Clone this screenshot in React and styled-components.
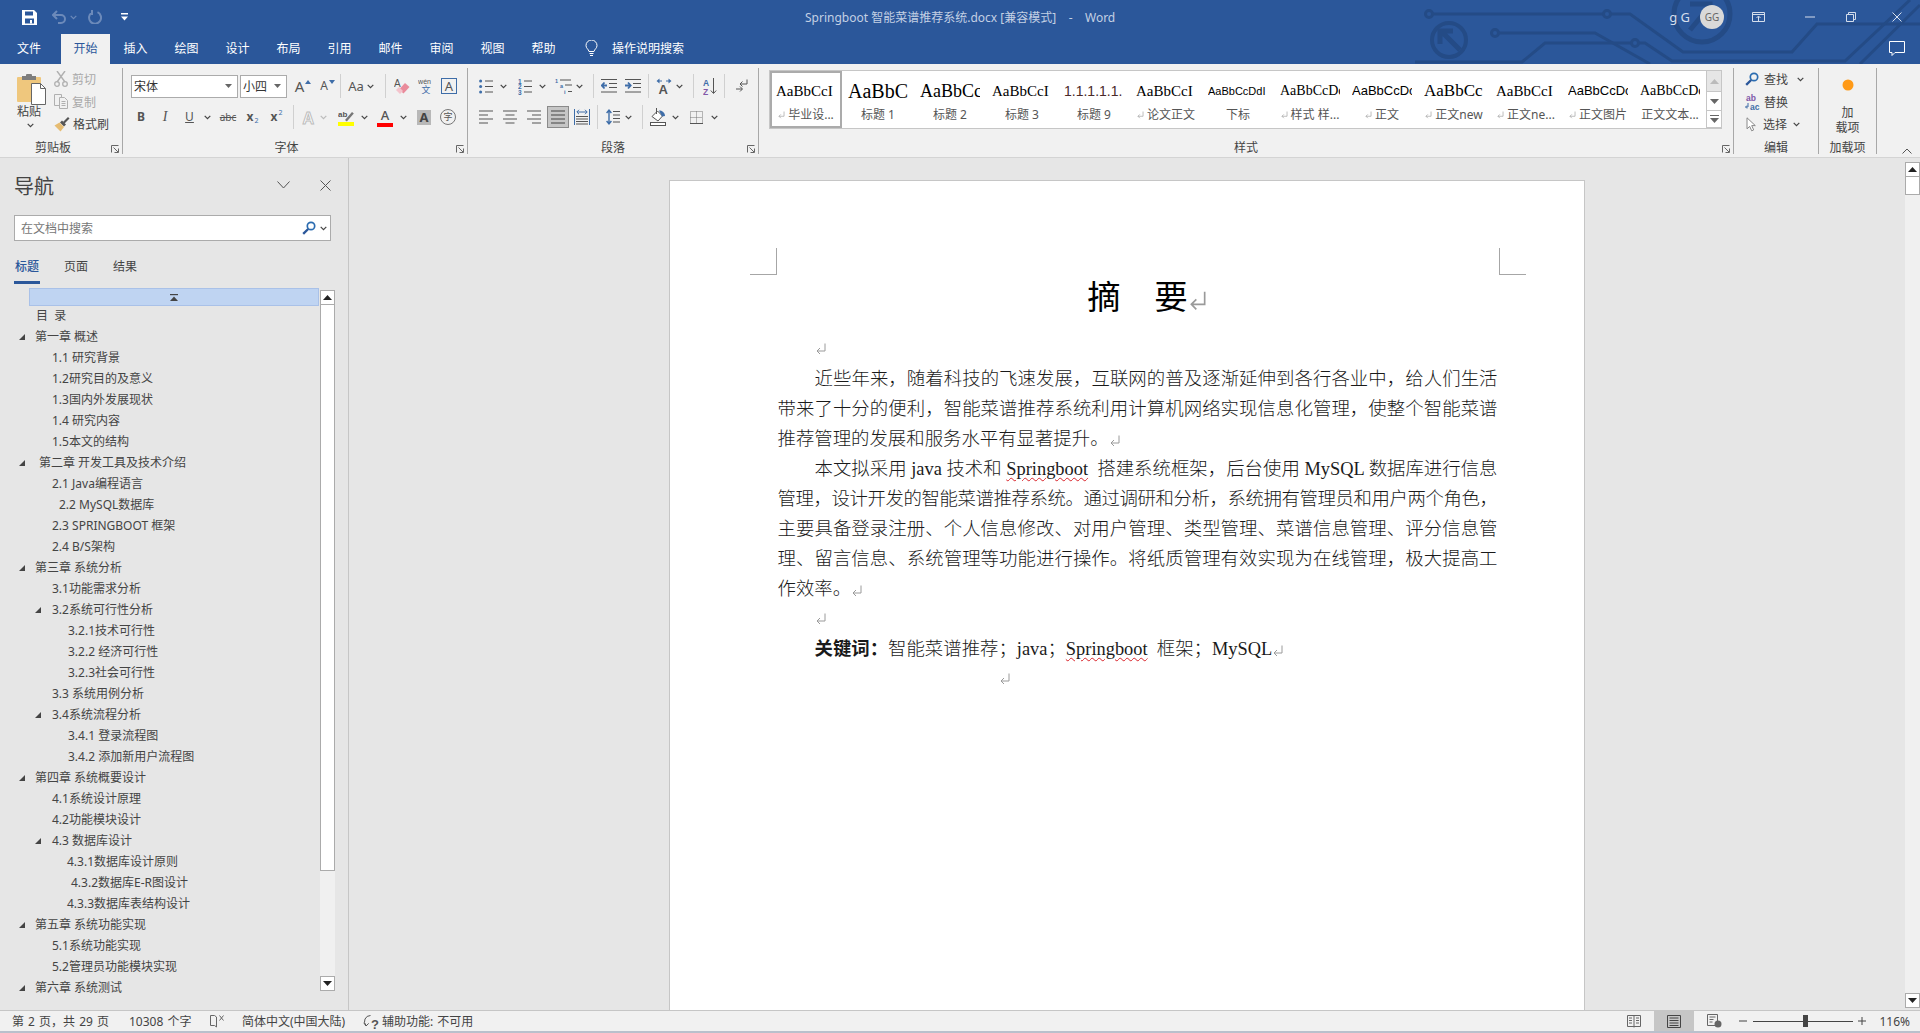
import React from 'react';
import styled, { createGlobalStyle } from 'styled-components';

const GlobalStyle = createGlobalStyle`
  html, body {
    margin: 0;
    padding: 0;
    height: 100%;
    overflow: hidden;
  }
  body {
    font-family: "Noto Sans", "Noto Sans CJK SC", sans-serif;
    font-size: 12px;
    color: #444;
  }
  * {
    box-sizing: border-box;
  }
`;

const Shell = styled.div`
  width: 1920px;
  height: 1033px;
  display: flex;
  flex-direction: column;
  overflow: hidden;
  background: #e6e6e6;
`;

/* ---------- title bar ---------- */

const Head = styled.header`
  position: relative;
  height: 64px;
  flex: none;
  background: #2b579a;
  overflow: hidden;
`;

const Circuit = styled.svg`
  position: absolute;
  right: 0;
  top: 0;
`;

const TitleRow = styled.div`
  position: relative;
  height: 34px;
  display: flex;
  align-items: center;
`;

const Qat = styled.div`
  width: 805px;
  display: flex;
  align-items: center;
  padding-left: 22px;
`;

const QatItem = styled.span`
  display: inline-flex;
  margin-left: ${p => p.$ml || 0}px;
`;

const DocTitle = styled.div`
  flex: 1;
  color: #c3d0e4;
  font-size: 12px;
  white-space: pre;
`;

const Account = styled.div`
  display: flex;
  align-items: center;
  color: #d5deec;
  font-size: 13px;
`;

const Avatar = styled.span`
  width: 24px;
  height: 24px;
  margin-left: 10px;
  border-radius: 50%;
  background: #d9d9d9;
  color: #666;
  font-size: 10px;
  display: flex;
  align-items: center;
  justify-content: center;
`;

const WinBtn = styled.span`
  display: inline-flex;
  margin-left: ${p => p.$ml}px;
`;

const TabRow = styled.nav`
  position: relative;
  height: 30px;
  display: flex;
  align-items: stretch;
  padding-left: 3px;
`;

const RibbonTab = styled.span`
  width: ${p => p.$w || 51}px;
  margin-right: ${p => p.$mr || 0}px;
  display: flex;
  align-items: center;
  justify-content: center;
  color: ${p => (p.$active ? '#2b579a' : '#fff')};
  background: ${p => (p.$active ? '#f1f1f1' : 'transparent')};
  padding-bottom: 2px;
`;

const TellMe = styled.span`
  display: flex;
  align-items: center;
  margin-left: 16px;
  gap: 14px;
  color: #fff;
  padding-bottom: 2px;
`;

const CommentBtn = styled.span`
  position: absolute;
  right: 15px;
  top: 7px;
  display: flex;
`;

/* ---------- ribbon ---------- */

const Ribbon = styled.section`
  height: 94px;
  flex: none;
  display: flex;
  padding-top: 4px;
  background: #f1f1f1;
  border-bottom: 1px solid #d4d4d4;
`;

const Group = styled.div`
  position: relative;
  width: ${p => p.$w}px;
  height: 86px;
  flex: none;
  border-right: 1px solid #a8a8a8;
`;

const GroupLabel = styled.div`
  position: absolute;
  left: 0;
  right: ${p => p.$inset || 0}px;
  bottom: -2px;
  height: 16px;
  line-height: 16px;
  text-align: center;
  color: #444;
`;

const Launcher = styled.span`
  position: absolute;
  right: 3px;
  bottom: 1px;
  display: flex;
`;

const ClipBody = styled.div`
  display: flex;
  padding-left: 17px;
`;

const PasteCol = styled.div`
  width: 28px;
  padding-top: 6px;
  display: flex;
  flex-direction: column;
`;

const PasteText = styled.span`
  width: 24px;
  margin-top: -2px;
  text-align: center;
  line-height: 18px;
`;

const PasteChev = styled.span`
  width: 26px;
  display: flex;
  justify-content: center;
  margin-top: 2px;
`;

const SmallCol = styled.div`
  margin-left: 9px;
  display: flex;
  flex-direction: column;
`;

const SmallBtn = styled.div`
  height: 22.5px;
  display: flex;
  align-items: center;
  gap: ${p => p.$gap || 4}px;
  color: ${p => (p.$dim ? '#a9a9a9' : '#444')};
`;

const ToolRows = styled.div`
  display: flex;
  flex-direction: column;
  gap: 7px;
  padding: 6px 0 0 ${p => p.$pl}px;
`;

const ToolRow = styled.div`
  height: 24px;
  display: flex;
  align-items: center;
`;

const Tool = styled.span`
  width: ${p => p.$w}px;
  margin-left: ${p => p.$ml || 0}px;
  flex: none;
  display: inline-flex;
  align-items: center;
  justify-content: center;
`;

const Rule = styled.span`
  width: 1px;
  height: 24px;
  flex: none;
  margin-left: ${p => p.$ml}px;
  background: #d0d0d0;
`;

const Combo = styled.span`
  width: ${p => p.$w}px;
  height: 23px;
  margin-left: ${p => p.$ml || 0}px;
  flex: none;
  display: flex;
  align-items: center;
  justify-content: space-between;
  padding: 0 5px 0 2px;
  background: #fff;
  border: 1px solid #ababab;
  color: #333;
`;

const Letter = styled.span`
  font-family: ${p => (p.$serif ? '"Liberation Serif", serif' : '"Noto Sans", sans-serif')};
  font-size: ${p => p.$size || 13}px;
  font-weight: ${p => (p.$bold ? 700 : 400)};
  font-style: ${p => (p.$italic ? 'italic' : 'normal')};
  text-decoration: ${p => p.$deco || 'none'};
  color: ${p => p.$color || '#555'};
  line-height: 16px;
`;

const SupSub = styled.span`
  display: inline-flex;
  font-size: 7px;
  color: #3e6da8;
  line-height: 8px;
  margin-left: 1px;
  transform: translateY(${p => (p.$up ? '-4px' : '4px')});
`;

const BoxA = styled.span`
  width: 16px;
  height: 16px;
  display: flex;
  align-items: center;
  justify-content: center;
  border: 1px solid #3e6da8;
  color: #555;
  font-size: 13px;
  line-height: 14px;
`;

const GrayA = styled.span`
  width: 14px;
  height: 15px;
  background: #b8b8b8;
  color: #444;
  font-size: 13px;
  font-weight: 700;
  line-height: 15px;
  display: flex;
  align-items: center;
  justify-content: center;
`;

const RoundChar = styled.span`
  width: 16px;
  height: 16px;
  border: 1px solid #777;
  border-radius: 50%;
  color: #555;
  font-size: 9px;
  line-height: 14px;
  display: flex;
  align-items: center;
  justify-content: center;
`;

const ColorA = styled.span`
  width: 16px;
  height: 19px;
  display: flex;
  flex-direction: column;
  align-items: center;
  justify-content: flex-end;
  color: #555;
  font-size: 13px;
  font-weight: 500;
  line-height: 14px;
`;

const ColorBar = styled.span`
  width: 16px;
  height: 4px;
  margin-top: 1px;
  flex: none;
  background: ${p => p.$color};
`;

const ActiveBox = styled.span`
  width: 22px;
  height: 22px;
  margin-left: ${p => p.$ml}px;
  flex: none;
  display: flex;
  align-items: center;
  justify-content: center;
  background: #c6c6c6;
  border: 1px solid #8a8a8a;
`;

/* styles gallery */

const GalleryWrap = styled.div`
  padding: 2px 0 0 10px;
`;

const Gallery = styled.div`
  width: 953px;
  height: 59px;
  display: flex;
  background: #fff;
  border: 1px solid #c6c6c6;
`;

const StyleCell = styled.div`
  width: 72px;
  flex: none;
  display: flex;
  flex-direction: column;
  align-items: center;
  padding: 3px 5px 0;
  overflow: hidden;
  border: ${p => (p.$selected ? '2px solid #ababab' : '2px solid transparent')};
`;

const StylePreview = styled.div`
  width: 60px;
  height: 31px;
  line-height: 30px;
  white-space: nowrap;
  overflow: hidden;
  color: ${p => p.$color || '#000'};
  font-family: ${p => (p.$sans ? '"Liberation Sans", sans-serif' : '"Liberation Serif", serif')};
  font-size: ${p => p.$size}px;
`;

const StyleName = styled.div`
  height: 16px;
  line-height: 16px;
  white-space: nowrap;
  color: #555;
  display: flex;
  align-items: center;
  gap: 3px;
`;

const GalleryScroll = styled.div`
  width: 15px;
  flex: none;
  display: flex;
  flex-direction: column;
  border-left: 1px solid #c6c6c6;
`;

const GalleryBtn = styled.span`
  height: ${p => p.$h}px;
  display: flex;
  align-items: center;
  justify-content: center;
  background: ${p => (p.$dim ? '#e6e6e6' : '#fff')};
  border-bottom: 1px solid #c6c6c6;
`;

const EditCol = styled.div`
  display: flex;
  flex-direction: column;
  padding-left: 11px;
`;

const AddinBody = styled.div`
  display: flex;
  flex-direction: column;
  align-items: center;
  padding-top: 11px;
  line-height: 15px;
`;

const AddinText = styled.div`
  margin-top: 14px;
  text-align: center;
`;

const Collapse = styled.span`
  align-self: flex-end;
  margin: 0 0 3px 25px;
  display: flex;
`;

/* ---------- main ---------- */

const Main = styled.main`
  flex: 1;
  min-height: 0;
  display: flex;
`;

const NavPane = styled.aside`
  width: 349px;
  flex: none;
  display: flex;
  flex-direction: column;
  overflow: hidden;
  background: #e6e6e6;
  border-right: 1px solid #c6c6c6;
`;

const NavHead = styled.div`
  height: 28px;
  margin-top: 13px;
  display: flex;
  align-items: center;
  padding: 0 17px 0 14px;
  font-size: 20px;
  color: #444;
`;

const NavTitle = styled.span`
  flex: 1;
`;

const NavClose = styled.span`
  display: flex;
  margin-left: 30px;
`;

const SearchBox = styled.div`
  width: 317px;
  height: 26px;
  margin: 16px 0 0 14px;
  flex: none;
  display: flex;
  align-items: center;
  padding: 0 3px 0 6px;
  background: #fff;
  border: 1px solid #ababab;
  color: #777;
`;

const SearchHint = styled.span`
  flex: 1;
`;

const NavTabs = styled.div`
  display: flex;
  gap: 23px;
  margin: 16px 0 0 14px;
  flex: none;
`;

const NavTab = styled.span`
  width: 26px;
  padding-bottom: 5px;
  text-align: center;
  line-height: 19px;
  color: ${p => (p.$active ? '#2b579a' : '#444')};
  font-weight: ${p => (p.$active ? 500 : 400)};
  border-bottom: 3px solid ${p => (p.$active ? '#2b579a' : 'transparent')};
`;

const TreeArea = styled.div`
  margin-top: 4px;
  flex: 1;
  min-height: 0;
  display: flex;
`;

const TreeCol = styled.div`
  width: 320px;
  flex: none;
`;

const TopBar = styled.div`
  height: 18px;
  margin: 0 0 -1px 29px;
  width: 290px;
  display: flex;
  align-items: center;
  justify-content: center;
  background: #bfd4f2;
  border: 1px solid #a9c1e8;
`;

const TreeRow = styled.div`
  height: 21px;
  display: flex;
  align-items: center;
  padding-left: ${p => p.$pl}px;
  white-space: pre;
  color: #444;
  line-height: 21px;
`;

const Caret = styled.span`
  width: ${p => p.$w}px;
  flex: none;
  display: flex;
`;

const ScrollCol = styled.div`
  width: 15px;
  height: ${p => p.$h}px;
  flex: none;
  margin-top: ${p => p.$mt}px;
  display: flex;
  flex-direction: column;
  background: #f0f0f0;
`;

const ScrollBtn = styled.span`
  width: 15px;
  height: 15px;
  flex: none;
  display: flex;
  align-items: center;
  justify-content: center;
  background: #fff;
  border: 1px solid #ababab;
`;

const ScrollThumb = styled.span`
  height: ${p => p.$h}px;
  flex: none;
  background: #fff;
  border: 1px solid #ababab;
  border-top: 0;
`;

const ScrollTrack = styled.span`
  flex: 1;
`;

const DocArea = styled.div`
  flex: 1;
  min-width: 0;
  padding: 22px 0 0 319.5px;
  overflow: hidden;
`;

const Page = styled.article`
  position: relative;
  width: 916px;
  height: 900px;
  padding: 96px 86px 0 108px;
  background: #fff;
  border: 1px solid #c6c6c6;
  color: #1a1a1a;
  font-family: "Liberation Serif", "Noto Sans CJK SC", serif;
  font-size: 18.4px;
  font-weight: 300;
`;

const CropMark = styled.span`
  position: absolute;
  top: 67px;
  width: 27px;
  height: 27px;
  border-bottom: 1px solid #a6a6a6;
  ${p => (p.$right ? 'left: 829px; border-left: 1px solid #a6a6a6;' : 'left: 80px; border-right: 1px solid #a6a6a6;')}
`;

const DocHeading = styled.h1`
  margin: 0 0 15px;
  height: 42px;
  line-height: 42px;
  text-align: center;
  font-size: 33.5px;
  font-weight: 400;
  color: #000;
`;

const Line = styled.div`
  height: 30px;
  line-height: 30px;
  padding-left: ${p => p.$pl || 0}px;
  letter-spacing: ${p => p.$ls || 0}px;
  text-align: ${p => (p.$fill ? 'justify' : 'left')};
  text-align-last: ${p => (p.$fill ? 'justify' : 'left')};
`;

const Wavy = styled.span`
  text-decoration: underline wavy #d8232a 1px;
  text-underline-offset: 2px;
`;

const Strong = styled.strong`
  font-weight: 700;
`;

const MarkWrap = styled.span`
  display: inline-flex;
  vertical-align: middle;
  margin: ${p => p.$m || '0'};
`;

/* ---------- status bar ---------- */

const StatusBar = styled.footer`
  height: 23px;
  flex: none;
  display: flex;
  align-items: stretch;
  padding-left: 12px;
  background: #f1f1f1;
  border-top: 1px solid #c6c6c6;
  border-bottom: 2px solid #b9c0cc;
`;

const StatusItem = styled.span`
  width: ${p => p.$w}px;
  flex: none;
  display: flex;
  align-items: center;
  white-space: pre;
  word-spacing: 1px;
`;

const StatusRight = styled.div`
  margin-left: auto;
  padding-right: 10px;
  display: flex;
  align-items: stretch;
`;

const ViewBtn = styled.span`
  width: ${p => p.$w}px;
  margin-left: ${p => p.$ml}px;
  display: flex;
  align-items: center;
  justify-content: center;
  background: ${p => (p.$active ? '#c6c6c6' : 'transparent')};
`;

const Zoom = styled.span`
  position: relative;
  width: 100px;
  margin-left: 6px;
  display: flex;
  align-items: center;
  &::before {
    content: '';
    width: 100%;
    height: 1px;
    background: #444;
  }
`;

const ZoomThumb = styled.span`
  position: absolute;
  left: 50px;
  top: 4px;
  width: 5px;
  height: 12px;
  background: #444;
`;

const ZoomText = styled.span`
  margin-left: 13px;
  display: flex;
  align-items: center;
  color: #444;
`;

/* ---------- icons ---------- */

const GRAY = '#555';
const BLUE = '#3e6da8';
const DIM = '#6c8aba';

const Ico = ({ w, h, children }) => (
  <svg width={w} height={h} viewBox={`0 0 ${w} ${h}`} fill="none">{children}</svg>
);

const Chev = ({ color = '#444' }) => (
  <Ico w={7} h={5}><path d="M.7 .8 3.5 3.6 6.3 .8" stroke={color} strokeWidth="1.2" /></Ico>
);

const ComboArrow = () => <Ico w={7} h={4}><path d="M0 0h7L3.5 4z" fill="#666" /></Ico>;

const ReturnMark = ({ w = 12, h = 12 }) => (
  <svg width={w} height={h} viewBox="0 0 11 12" fill="none">
    <path d="M9.5 .5V8H1.500M4.500 5 1.500 8 4.500 11" stroke="#9a9a9a" strokeWidth="1" />
  </svg>
);

const Launch = () => (
  <Ico w={8} h={8}>
    <path d="M.5 7.5V.5h7" stroke="#666" />
    <path d="M2.5 2.5 7 7M7.5 3.5v4h-4" stroke="#666" />
  </Ico>
);

const TextLines = ({ rows, color = GRAY, w = 14 }) => (
  <Ico w={w} h={14}>
    {rows.map((r, i) => <rect key={i} x={r[0]} y={1 + i * 4 - .5} width={r[1]} height="1" fill={color} />)}
  </Ico>
);

const ListIcon = ({ kind }) => (
  <Ico w={14} h={17}>
    {[3, 8.5, 14].map((y, i) => (
      <g key={y}>
        {kind === 'bullet'
          ? <circle cx="1.6" cy={y} r="1.5" fill={BLUE} />
          : <text x="0" y={y + 2.5} fontSize="6.5" fontWeight="700" fill={BLUE} fontFamily="Liberation Sans">{i + 1}</text>}
        <rect x="6" y={y - .5} width="8" height="1" fill={GRAY} />
      </g>
    ))}
  </Ico>
);

const Multilevel = () => (
  <Ico w={18} h={18}>
    <text x="0" y="6" fontSize="5.5" fontWeight="700" fill={BLUE} fontFamily="Liberation Sans">1</text>
    <rect x="5" y="2.5" width="11" height="1" fill={GRAY} />
    <text x="5" y="11" fontSize="5.5" fontWeight="700" fill={BLUE} fontFamily="Liberation Sans">a</text>
    <rect x="10" y="7.5" width="7" height="1" fill={GRAY} />
    <text x="9" y="17" fontSize="5.5" fontWeight="700" fill={BLUE} fontFamily="Liberation Sans">i</text>
    <rect x="13" y="14" width="4" height="1" fill={GRAY} />
  </Ico>
);

const IndentIcon = ({ out }) => (
  <Ico w={16} h={14}>
    <path d="M0 .5h16M8 4.5h8M8 8.5h8M0 13h16" stroke={GRAY} />
    <path d={out ? 'M6 6.5H1M3.5 3.5 .8 6.5l2.7 3' : 'M0 6.5h5M3 3.5l2.7 3-2.7 3'} stroke={BLUE} strokeWidth="1.8" />
  </Ico>
);

const TextDirIcon = () => (
  <Ico w={16} h={17}>
    <text x="2.5" y="15.5" fontSize="13" fontWeight="700" fill={GRAY} fontFamily="Liberation Sans">A</text>
    <path d="M.5 3 3.5.5v5zM15.5 3l-3-2.5v5z" fill={BLUE} />
    <path d="M3 3h3M10 3h3" stroke={BLUE} />
  </Ico>
);

const SortIcon = () => (
  <Ico w={14} h={19}>
    <text x="0" y="9" fontSize="8.5" fontWeight="700" fill={BLUE} fontFamily="Liberation Sans">A</text>
    <text x="0" y="18" fontSize="8.5" fontWeight="700" fill="#8258a8" fontFamily="Liberation Sans">Z</text>
    <path d="M10.5 1v15M7.8 13.5l2.7 3 2.7-3" stroke={GRAY} />
  </Ico>
);

const PilcrowIcon = () => (
  <Ico w={13} h={14}>
    <path d="M12 .5V5H5M7.5 2.5 5 5l2.5 2.5" stroke={GRAY} />
    <path d="M1 10h6M5 7.5 7.5 10 5 12.5" stroke={GRAY} />
  </Ico>
);

const DistIcon = () => (
  <Ico w={16} h={16}>
    <path d="M.5 0v16M15.5 0v16" stroke={BLUE} />
    <path d="M3 3h10M5 .8 2.8 3 5 5.2M11 .8 13.2 3 11 5.2" stroke={BLUE} />
    <path d="M2 7.5h12M2 10h12M2 12.5h12M2 15h12" stroke={GRAY} />
  </Ico>
);

const SpacingIcon = () => (
  <Ico w={14} h={16}>
    <path d="M3 2v12M.6 4 3 1.2 5.4 4M.6 12 3 14.8 5.4 12" stroke={BLUE} strokeWidth="1.4" />
    <path d="M7 2.5h7M7 6h7M7 9.5h7M7 13h7" stroke={GRAY} />
  </Ico>
);

const ShadeIcon = () => (
  <Ico w={16} h={18}>
    <path d="M2 8.5 7.5 3l5 5-4.5 5z" stroke={GRAY} fill="#fff" />
    <path d="M6.5 0v6" stroke={GRAY} />
    <path d="M9 2.500c3 0 6 2 6 5.500l-3 .5z" fill={BLUE} />
    <rect x=".5" y="14.5" width="15" height="3" stroke={GRAY} fill="#fff" />
  </Ico>
);

const BorderIcon = () => (
  <Ico w={13} h={13}>
    <path d="M.5.5h12v12H.5zM6.500.5v12M.5 6.500h12" stroke="#777" strokeDasharray="1 1" />
    <path d="M0 12.500h13" stroke="#555" />
  </Ico>
);

const Eraser = () => (
  <Ico w={16} h={18}>
    <text x="0" y="10" fontSize="10" fill={GRAY} fontFamily="Liberation Sans">A</text>
    <path d="M5 12.500 11 6l4.500 4-6 6.500z" fill="#e98b9b" />
    <path d="M2 13l3-3 4 4-3 3z" fill="#f4c3cc" />
  </Ico>
);

const Highlighter = () => (
  <Ico w={16} h={18}>
    <text x="0" y="9" fontSize="8" fill={GRAY} fontFamily="Liberation Sans" fontWeight="700">ab</text>
    <path d="M7 12 14 4l1.800 1.400-7 8.200z" fill="#777" />
    <rect y="14" width="16" height="4" fill="#ff0" />
  </Ico>
);

const OutlineA = () => (
  <Ico w={14} h={17}>
    <text x=".5" y="15" fontSize="16" fill="#fff" stroke="#bdbdbd" strokeWidth="1" fontFamily="Liberation Sans" fontWeight="700">A</text>
  </Ico>
);

const WenIcon = () => (
  <Ico w={18} h={20}>
    <text x="0" y="8" fontSize="8" fill={GRAY} fontFamily="Liberation Sans">wén</text>
    <text x="4" y="18" fontSize="10" fill={BLUE} fontFamily="Noto Sans CJK SC">文</text>
  </Ico>
);

const FindIcon = () => (
  <Ico w={14} h={14}>
    <circle cx="9" cy="5" r="3.700" stroke="#2b6cb0" strokeWidth="1.700" />
    <path d="M6.200 8 1.200 12.800" stroke="#2b579a" strokeWidth="2.400" />
  </Ico>
);

const ReplaceIcon = () => (
  <Ico w={16} h={18}>
    <text x="1" y="8" fontSize="8.5" fill="#7e57a8" fontFamily="Liberation Sans" fontWeight="700">ab</text>
    <text x="5" y="16.500" fontSize="8.5" fill={BLUE} fontFamily="Liberation Sans" fontWeight="700">ac</text>
    <path d="M3 10v4H.8M2 12.500.5 14 2 15.500" stroke={BLUE} />
  </Ico>
);

const SelectIcon = () => (
  <Ico w={11} h={15}>
    <path d="M1 .8v11l2.700-2.400 2 4.400 2-.9-2-4.300h3.600z" stroke="#888" fill="#fff" />
  </Ico>
);

const PasteIcon = () => (
  <Ico w={29} h={31}>
    <rect x="0" y="3" width="24" height="25" rx="1" fill="#efc77d" />
    <rect x="5" y="2" width="14" height="4" fill="#7d7d7d" />
    <rect x="9" y="0" width="6" height="3" rx="1" fill="#7d7d7d" />
    <path d="M14.500 9.500h9l5 5v16h-14z" fill="#fff" stroke="#666" />
    <path d="M23.500 9.500v5h5" stroke="#666" />
  </Ico>
);

const ScissorsIcon = () => (
  <Ico w={14} h={16}>
    <path d="M3 0l8 11M11 0 3 11" stroke="#b0b0b0" strokeWidth="1.400" />
    <circle cx="3" cy="13" r="2.300" stroke="#b0b0b0" strokeWidth="1.300" />
    <circle cx="11" cy="13" r="2.300" stroke="#b0b0b0" strokeWidth="1.300" />
  </Ico>
);

const CopyIcon = () => (
  <Ico w={14} h={15}>
    <path d="M.5.5h7v11h-7z" stroke="#b0b0b0" />
    <path d="M5.500 3.500h5l3 3v8h-8z" stroke="#b0b0b0" fill="#f1f1f1" />
    <path d="M7.500 7.500h4M7.500 9.500h4M7.500 11.500h4" stroke="#b0b0b0" />
  </Ico>
);

const BrushIcon = () => (
  <Ico w={16} h={16}>
    <path d="M9 6 14 1l1.500 1.500-5 5z" fill="#555" />
    <path d="M8 4.500l4 4-2 2L6 6.500z" fill="#555" />
    <path d="M5.500 6.500l4.500 4.500-3.500 4.500-6-6z" fill="#e6bc72" />
  </Ico>
);

const Tri = ({ up, color = '#222' }) => (
  <Ico w={9} h={5}><path d={up ? 'M0 5 4.500 0 9 5z' : 'M0 0h9L4.500 5z'} fill={color} /></Ico>
);

const SizeMark = ({ up }) => (
  <Ico w={6} h={4}><path d={up ? 'M0 4 3 0 6 4z' : 'M0 0h6L3 4z'} fill={BLUE} /></Ico>
);

const CaretTri = () => <Ico w={6} h={6}><path d="M6 0v6H0z" fill="#444" /></Ico>;

const CircuitArt = () => (
  <Circuit width="520" height="64" viewBox="0 0 520 64" fill="none" stroke="#244b86" strokeWidth="3">
    <circle cx="29" cy="14" r="3.500" />
    <path d="M33 14H203M211 14h19l53 38h109l25-28h103" />
    <circle cx="207" cy="14" r="3.500" />
    <circle cx="49" cy="40" r="17" strokeWidth="4" />
    <path d="M60 50 42 32M40 44V31h13" strokeWidth="5" />
    <circle cx="95" cy="33" r="3.500" />
    <path d="M99 33h96l55 31" />
    <path d="M15 62h107l23-19h86M239 43h6l27 18h173L510 0M460 64 520 5" />
    <circle cx="235" cy="43" r="3.500" />
    <circle cx="302" cy="14" r="28" strokeWidth="5" />
    <path d="M290 30 310 6M290 4h20v20" strokeWidth="5" />
  </Circuit>
);

/* ---------- data ---------- */

const tabs = ['文件', '开始', '插入', '绘图', '设计', '布局', '引用', '邮件', '审阅', '视图', '帮助'];

const styleItems = [
  { text: 'AaBbCcI', size: 15, label: '毕业设...', mark: true, selected: true },
  { text: 'AaBbC', size: 20, label: '标题 1' },
  { text: 'AaBbCc', size: 18, label: '标题 2' },
  { text: 'AaBbCcI', size: 15, label: '标题 3' },
  { text: '1.1.1.1.1.', size: 14, sans: true, color: '#4a2a2a', label: '标题 9' },
  { text: 'AaBbCcI', size: 15, label: '论文正文', mark: true },
  { text: 'AaBbCcDdI', size: 11, sans: true, label: '下标' },
  { text: 'AaBbCcDc', size: 14, label: '样式 样...', mark: true },
  { text: 'AaBbCcDc', size: 13, sans: true, label: '正文', mark: true },
  { text: 'AaBbCc', size: 17, label: '正文new', mark: true },
  { text: 'AaBbCcI', size: 15, label: '正文ne...', mark: true },
  { text: 'AaBbCcDc', size: 13, sans: true, label: '正文图片', mark: true },
  { text: 'AaBbCcDc', size: 14, label: '正文文本...' },
];

// [text x, label, caret x]
const tree = [
  [36, '目  录'],
  [35, '第一章 概述', 19],
  [52, '1.1 研究背景'],
  [52, '1.2研究目的及意义'],
  [52, '1.3国内外发展现状'],
  [52, '1.4 研究内容'],
  [52, '1.5本文的结构'],
  [39, '第二章 开发工具及技术介绍', 19],
  [52, '2.1 Java编程语言'],
  [59, '2.2 MySQL数据库'],
  [52, '2.3 SPRINGBOOT 框架'],
  [52, '2.4 B/S架构'],
  [35, '第三章 系统分析', 19],
  [52, '3.1功能需求分析'],
  [52, '3.2系统可行性分析', 35],
  [68, '3.2.1技术可行性'],
  [68, '3.2.2 经济可行性'],
  [68, '3.2.3社会可行性'],
  [52, '3.3 系统用例分析'],
  [52, '3.4系统流程分析', 35],
  [68, '3.4.1 登录流程图'],
  [68, '3.4.2 添加新用户流程图'],
  [35, '第四章 系统概要设计', 19],
  [52, '4.1系统设计原理'],
  [52, '4.2功能模块设计'],
  [52, '4.3 数据库设计', 35],
  [67, '4.3.1数据库设计原则'],
  [71, '4.3.2数据库E-R图设计'],
  [67, '4.3.3数据库表结构设计'],
  [35, '第五章 系统功能实现', 19],
  [52, '5.1系统功能实现'],
  [52, '5.2管理员功能模块实现'],
  [35, '第六章 系统测试', 19],
];

function TitleBar() {
  return (
    <Head>
      <CircuitArt />
      <TitleRow>
        <Qat>
          <Ico w={15} h={15}>
            <path d="M0 0h12l3 3v12H0z" fill="#fff" />
            <rect x="3" y="1.500" width="8" height="4" fill="#2b579a" />
            <rect x="3" y="8.500" width="9" height="5" fill="#2b579a" />
            <rect x="8" y="10" width="2" height="3.500" fill="#fff" />
          </Ico>
          <QatItem $ml={15}>
            <Ico w={14} h={14}>
              <path d="M1 5h8a4 4 0 0 1 0 8H6M5 1 1 5l4 4" stroke={DIM} strokeWidth="2" />
            </Ico>
          </QatItem>
          <QatItem $ml={4}><Chev color={DIM} /></QatItem>
          <QatItem $ml={11}>
            <Ico w={14} h={14}>
              <path d="M9.500 2.200A6 6 0 1 1 4 2.500M4 0v5" stroke={DIM} strokeWidth="2" />
            </Ico>
          </QatItem>
          <QatItem $ml={19}>
            <Ico w={7} h={8}>
              <rect width="7" height="1.500" fill="#fff" />
              <path d="M0 3.500h7L3.500 7.500z" fill="#fff" />
            </Ico>
          </QatItem>
        </Qat>
        <DocTitle>Springboot 智能菜谱推荐系统.docx [兼容模式]    -    Word</DocTitle>
        <Account>
          g G
          <Avatar>GG</Avatar>
        </Account>
        <WinBtn $ml={28}>
          <Ico w={13} h={11}>
            <path d="M.5.5h12v9H.5zM.5 2.500h12M6.500 9V4.500M4.500 6l2-2 2 2" stroke="#d5deec" />
          </Ico>
        </WinBtn>
        <WinBtn $ml={40}>
          <Ico w={10} h={2}><rect y=".5" width="10" height="1" fill="#d5deec" /></Ico>
        </WinBtn>
        <WinBtn $ml={31}>
          <Ico w={10} h={10}>
            <path d="M.5 2.500h7v7h-7zM2.500 2.500v-2h7v7h-2" stroke="#d5deec" />
          </Ico>
        </WinBtn>
        <WinBtn $ml={36}>
          <Ico w={10} h={10}><path d="M.5.5l9 9M9.500.5l-9 9" stroke="#d5deec" /></Ico>
        </WinBtn>
        <WinBtn $ml={18}><span /></WinBtn>
      </TitleRow>
      <TabRow>
        {tabs.map((t, i) => (
          <RibbonTab key={t} $active={i === 1} $w={i === 1 ? 49 : i === 0 ? 52 : 51} $mr={i === 0 ? 6 : 0}>{t}</RibbonTab>
        ))}
        <TellMe>
          <Ico w={13} h={17}>
            <path d="M4 11.500C3.500 9 1 8.500 1 5.500a5.500 5.500 0 0 1 11 0C12 8.500 9.500 9 9 11.500zM4.500 13.500h4M5 15.500h3" stroke="#fff" />
          </Ico>
          操作说明搜索
        </TellMe>
        <CommentBtn>
          <Ico w={16} h={15}>
            <path d="M.5.5h15v11H6l-3 3v-3H.5z" stroke="#fff" />
          </Ico>
        </CommentBtn>
      </TabRow>
    </Head>
  );
}

function ClipboardGroup() {
  return (
    <Group $w={123}>
      <ClipBody>
        <PasteCol>
          <PasteIcon />
          <PasteText>粘贴</PasteText>
          <PasteChev><Chev /></PasteChev>
        </PasteCol>
        <SmallCol>
          <SmallBtn $dim><ScissorsIcon />剪切</SmallBtn>
          <SmallBtn $dim><CopyIcon />复制</SmallBtn>
          <SmallBtn $gap={3}><BrushIcon />格式刷</SmallBtn>
        </SmallCol>
      </ClipBody>
      <GroupLabel $inset={16}>剪贴板</GroupLabel>
      <Launcher><Launch /></Launcher>
    </Group>
  );
}

function FontGroup() {
  return (
    <Group $w={345}>
      <ToolRows $pl={8}>
        <ToolRow>
          <Combo $w={107}>宋体<ComboArrow /></Combo>
          <Combo $w={47} $ml={2}>小四<ComboArrow /></Combo>
          <Tool $w={16} $ml={8}><Letter $size={15}>A</Letter><SupSub $up><SizeMark up /></SupSub></Tool>
          <Tool $w={15} $ml={9}><Letter $size={12}>A</Letter><SupSub $up><SizeMark /></SupSub></Tool>
          <Rule $ml={5} />
          <Tool $w={18} $ml={6}><Letter $size={13}>Aa</Letter></Tool>
          <Tool $w={7} $ml={2}><Chev /></Tool>
          <Rule $ml={11} />
          <Tool $w={16} $ml={8}><Eraser /></Tool>
          <Tool $w={16} $ml={8}><WenIcon /></Tool>
          <Tool $w={16} $ml={7}><BoxA>A</BoxA></Tool>
        </ToolRow>
        <ToolRow>
          <Tool $w={10} $ml={5}><Letter $bold $size={12}>B</Letter></Tool>
          <Tool $w={8} $ml={15}><Letter $italic $serif $size={14}>I</Letter></Tool>
          <Tool $w={11} $ml={15}><Letter $size={12} $deco="underline">U</Letter></Tool>
          <Tool $w={7} $ml={9}><Chev /></Tool>
          <Tool $w={18} $ml={8}><Letter $size={10} $deco="line-through">abc</Letter></Tool>
          <Tool $w={13} $ml={9}><Letter $bold $size={12}>x</Letter><SupSub>2</SupSub></Tool>
          <Tool $w={13} $ml={11}><Letter $bold $size={12}>x</Letter><SupSub $up>2</SupSub></Tool>
          <Rule $ml={10} />
          <Tool $w={14} $ml={8}><OutlineA /></Tool>
          <Tool $w={7} $ml={4}><Chev color="#bbb" /></Tool>
          <Tool $w={16} $ml={11}><Highlighter /></Tool>
          <Tool $w={7} $ml={7}><Chev /></Tool>
          <Tool $w={16} $ml={9}><ColorA>A<ColorBar $color="#f00" /></ColorA></Tool>
          <Tool $w={7} $ml={7}><Chev /></Tool>
          <Tool $w={14} $ml={10}><GrayA>A</GrayA></Tool>
          <Tool $w={16} $ml={9}><RoundChar>字</RoundChar></Tool>
        </ToolRow>
      </ToolRows>
      <GroupLabel $inset={17}>字体</GroupLabel>
      <Launcher><Launch /></Launcher>
    </Group>
  );
}

function ParagraphGroup() {
  return (
    <Group $w={291}>
      <ToolRows $pl={11}>
        <ToolRow>
          <Tool $w={14}><ListIcon kind="bullet" /></Tool>
          <Tool $w={7} $ml={7}><Chev /></Tool>
          <Tool $w={14} $ml={11}><ListIcon kind="number" /></Tool>
          <Tool $w={7} $ml={7}><Chev /></Tool>
          <Tool $w={18} $ml={9}><Multilevel /></Tool>
          <Tool $w={7} $ml={3}><Chev /></Tool>
          <Rule $ml={10} />
          <Tool $w={16} $ml={7}><IndentIcon out /></Tool>
          <Tool $w={16} $ml={8}><IndentIcon /></Tool>
          <Rule $ml={7} />
          <Tool $w={16} $ml={7}><TextDirIcon /></Tool>
          <Tool $w={7} $ml={4}><Chev /></Tool>
          <Rule $ml={10} />
          <Tool $w={14} $ml={9}><SortIcon /></Tool>
          <Rule $ml={7} />
          <Tool $w={13} $ml={10}><PilcrowIcon /></Tool>
        </ToolRow>
        <ToolRow>
          <Tool $w={14}><TextLines rows={[[0, 14], [0, 9], [0, 14], [0, 9]]} /></Tool>
          <Tool $w={14} $ml={10}><TextLines rows={[[0, 14], [2.5, 9], [0, 14], [2.5, 9]]} /></Tool>
          <Tool $w={14} $ml={10}><TextLines rows={[[0, 14], [5, 9], [0, 14], [5, 9]]} /></Tool>
          <ActiveBox $ml={6}><TextLines rows={[[0, 14], [0, 14], [0, 14], [0, 14]]} color="#444" /></ActiveBox>
          <Tool $w={16} $ml={5}><DistIcon /></Tool>
          <Rule $ml={7} />
          <Tool $w={14} $ml={8}><SpacingIcon /></Tool>
          <Tool $w={7} $ml={5}><Chev /></Tool>
          <Rule $ml={10} />
          <Tool $w={16} $ml={7}><ShadeIcon /></Tool>
          <Tool $w={7} $ml={6}><Chev /></Tool>
          <Tool $w={13} $ml={11}><BorderIcon /></Tool>
          <Tool $w={7} $ml={8}><Chev /></Tool>
        </ToolRow>
      </ToolRows>
      <GroupLabel>段落</GroupLabel>
      <Launcher><Launch /></Launcher>
    </Group>
  );
}

function StylesGroup() {
  return (
    <Group $w={975}>
      <GalleryWrap>
        <Gallery>
          {styleItems.map(item => (
            <StyleCell key={item.label} $selected={item.selected}>
              <StylePreview $size={item.size} $sans={item.sans} $color={item.color}>{item.text}</StylePreview>
              <StyleName>
                {item.mark && <ReturnMark w={7} h={8} />}
                {item.label}
              </StyleName>
            </StyleCell>
          ))}
          <GalleryScroll>
            <GalleryBtn $h={21} $dim><Tri up color="#bbb" /></GalleryBtn>
            <GalleryBtn $h={19}><Tri color="#666" /></GalleryBtn>
            <GalleryBtn $h={17}>
              <Ico w={9} h={8}>
                <rect width="9" height="1" fill="#666" />
                <path d="M0 3h9L4.500 8z" fill="#666" />
              </Ico>
            </GalleryBtn>
          </GalleryScroll>
        </Gallery>
      </GalleryWrap>
      <GroupLabel>样式</GroupLabel>
      <Launcher><Launch /></Launcher>
    </Group>
  );
}

function EditGroup() {
  return (
    <Group $w={85}>
      <EditCol>
        <SmallBtn $gap={5}><FindIcon />查找<Tool $w={7} $ml={4}><Chev /></Tool></SmallBtn>
        <SmallBtn $gap={3}><ReplaceIcon />替换</SmallBtn>
        <SmallBtn $gap={6}>
          <Tool $w={12}><SelectIcon /></Tool>
          选择
          <Tool $w={7}><Chev /></Tool>
        </SmallBtn>
      </EditCol>
      <GroupLabel>编辑</GroupLabel>
    </Group>
  );
}

function AddinGroup() {
  return (
    <Group $w={58}>
      <AddinBody>
        <Ico w={12} h={12}><circle cx="6" cy="6" r="5.500" fill="#ff9a17" /></Ico>
        <AddinText>加<br />载项</AddinText>
      </AddinBody>
      <GroupLabel>加载项</GroupLabel>
    </Group>
  );
}

function NavigationPane() {
  return (
    <NavPane>
      <NavHead>
        <NavTitle>导航</NavTitle>
        <Ico w={13} h={8}><path d="M.5.5 6.500 7l6-6.500" stroke="#555" /></Ico>
        <NavClose>
          <Ico w={11} h={11}><path d="M.5.5l10 10M10.500.5l-10 10" stroke="#555" /></Ico>
        </NavClose>
      </NavHead>
      <SearchBox>
        <SearchHint>在文档中搜索</SearchHint>
        <FindIcon />
        <Tool $w={7} $ml={4}><Chev /></Tool>
      </SearchBox>
      <NavTabs>
        <NavTab $active>标题</NavTab>
        <NavTab>页面</NavTab>
        <NavTab>结果</NavTab>
      </NavTabs>
      <TreeArea>
        <TreeCol>
          <TopBar>
            <Ico w={8} h={7}>
              <rect width="8" height="1.200" fill="#444" />
              <path d="M0 7 4 2.500 8 7z" fill="#444" />
            </Ico>
          </TopBar>
          {tree.map(([x, label, caretX]) => (
            <TreeRow key={label} $pl={caretX || x}>
              {caretX && <Caret $w={x - caretX}><CaretTri /></Caret>}
              {label}
            </TreeRow>
          ))}
        </TreeCol>
        <ScrollCol $h={701} $mt={2}>
          <ScrollBtn><Tri up /></ScrollBtn>
          <ScrollThumb $h={566} />
          <ScrollTrack />
          <ScrollBtn><Tri /></ScrollBtn>
        </ScrollCol>
      </TreeArea>
    </NavPane>
  );
}

function DocumentPage() {
  return (
    <DocArea>
      <Page>
        <CropMark />
        <CropMark $right />
        <DocHeading>
          摘　要
          <MarkWrap $m="0 -20px 0 0"><ReturnMark w={20} h={20} /></MarkWrap>
        </DocHeading>
        <Line $pl={37}><ReturnMark /></Line>
        <Line $fill $pl={37}>近些年来，随着科技的飞速发展，互联网的普及逐渐延伸到各行各业中，给人们生活</Line>
        <Line $fill>带来了十分的便利，智能菜谱推荐系统利用计算机网络实现信息化管理，使整个智能菜谱</Line>
        <Line>推荐管理的发展和服务水平有显著提升。<MarkWrap><ReturnMark /></MarkWrap></Line>
        <Line $fill $pl={37}>本文拟采用 java 技术和 <Wavy>Springboot</Wavy>&nbsp; 搭建系统框架，后台使用 MySQL 数据库进行信息</Line>
        <Line $fill $ls={-0.5}>管理，设计开发的智能菜谱推荐系统。通过调研和分析，系统拥有管理员和用户两个角色，</Line>
        <Line $fill>主要具备登录注册、个人信息修改、对用户管理、类型管理、菜谱信息管理、评分信息管</Line>
        <Line $fill>理、留言信息、系统管理等功能进行操作。将纸质管理有效实现为在线管理，极大提高工</Line>
        <Line>作效率。<MarkWrap><ReturnMark /></MarkWrap></Line>
        <Line $pl={37}><ReturnMark /></Line>
        <Line $pl={37}>
          <Strong>关键词：</Strong>智能菜谱推荐；java；<Wavy>Springboot</Wavy>&nbsp; 框架；MySQL
          <MarkWrap><ReturnMark /></MarkWrap>
        </Line>
        <Line $pl={221}><ReturnMark /></Line>
      </Page>
    </DocArea>
  );
}

function Footer() {
  return (
    <StatusBar>
      <StatusItem $w={117}>第 2 页，共 29 页</StatusItem>
      <StatusItem $w={81}>10308 个字</StatusItem>
      <StatusItem $w={32}>
        <Ico w={15} h={14}>
          <path d="M.5 1.500h4l2 1.500v10l-2-1.500h-4zM6.500 3v10" stroke="#666" />
          <path d="M9.500 1.500l4 5M13.500 1.500l-4 5" stroke="#666" />
        </Ico>
      </StatusItem>
      <StatusItem $w={121}>简体中文(中国大陆)</StatusItem>
      <StatusItem $w={19}>
        <Ico w={17} h={17}>
          <path d="M7.500 2.500a6 6 0 0 0-4.500 10" stroke="#555" />
          <path d="M.8 9.800 3 13l2.700-2.600" stroke="#555" />
          <text x="8" y="16" fontSize="13" fontWeight="700" fill="#555" fontFamily="Liberation Sans">?</text>
        </Ico>
      </StatusItem>
      <StatusItem>辅助功能: 不可用</StatusItem>
      <StatusRight>
        <ViewBtn $w={14} $ml={0}>
          <Ico w={14} h={13}>
            <path d="M.5.5h13v11H.5zM7 .5v12M2 3h3M2 5.500h3M2 8h3M9 3h3M9 5.500h3M9 8h3" stroke="#666" />
          </Ico>
        </ViewBtn>
        <ViewBtn $w={40} $ml={13} $active>
          <Ico w={14} h={13}>
            <path d="M.5.5h13v12H.5zM2.500 3h9M2.500 5.500h9M2.500 8h9M2.500 10.500h9" stroke="#444" />
          </Ico>
        </ViewBtn>
        <ViewBtn $w={15} $ml={13}>
          <Ico w={15} h={14}>
            <path d="M.5.500h10v11H.5zM2.500 3h6M2.500 5.500h4M2.500 8h3" stroke="#666" />
            <circle cx="11" cy="10" r="3.500" fill="#666" />
          </Ico>
        </ViewBtn>
        <ViewBtn $w={8} $ml={17}>
          <Ico w={8} h={2}><rect y=".5" width="8" height="1" fill="#444" /></Ico>
        </ViewBtn>
        <Zoom><ZoomThumb /></Zoom>
        <ViewBtn $w={8} $ml={5}>
          <Ico w={8} h={8}><path d="M0 4h8M4 0v8" stroke="#444" /></Ico>
        </ViewBtn>
        <ZoomText>116%</ZoomText>
      </StatusRight>
    </StatusBar>
  );
}

export default function App() {
  return (
    <Shell>
      <GlobalStyle />
      <TitleBar />
      <Ribbon>
        <ClipboardGroup />
        <FontGroup />
        <ParagraphGroup />
        <StylesGroup />
        <EditGroup />
        <AddinGroup />
        <Collapse>
          <Ico w={10} h={6}><path d="M.5 5.500 5 1l4.500 4.500" stroke="#555" /></Ico>
        </Collapse>
      </Ribbon>
      <Main>
        <NavigationPane />
        <DocumentPage />
        <ScrollCol $h={846} $mt={4}>
          <ScrollBtn><Tri up /></ScrollBtn>
          <ScrollThumb $h={18} />
          <ScrollTrack />
          <ScrollBtn><Tri /></ScrollBtn>
        </ScrollCol>
      </Main>
      <Footer />
    </Shell>
  );
}
